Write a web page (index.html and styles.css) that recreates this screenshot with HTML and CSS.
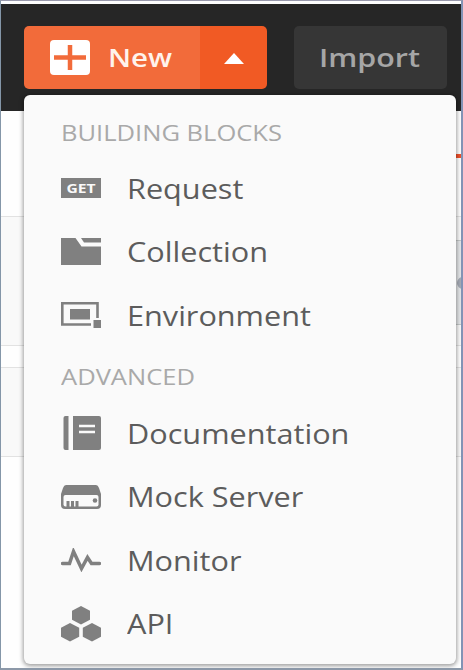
FILE: index.html
```html
<!DOCTYPE html>
<html lang="en">
<head>
    <meta charset="UTF-8">
    <meta name="viewport" content="width=device-width, initial-scale=1.0">
    <title>New</title>
    <link rel="stylesheet" href="styles.css">
</head>
<body>
    <div class="window">
        <header class="topbar">
            <div class="new-button">
                <button class="new-main">
                    <svg class="plus-icon" width="40" height="35" viewBox="0 0 40 35">
                        <rect width="40" height="35" rx="4" fill="#fff"/>
                        <path d="M4 17.5H36M20 5V30" stroke="#f26b3a" stroke-width="4.5"/>
                    </svg>
                    <span class="label">New</span>
                </button>
                <button class="new-toggle">
                    <svg width="20" height="11" viewBox="0 0 20 11"><path d="M0 11L10 0L20 11Z" fill="#fff"/></svg>
                </button>
            </div>
            <button class="import-button"><span class="label">Import</span></button>
        </header>
        <main class="page">
            <div class="tabs"><div class="active-tab"></div></div>
            <div class="url-bar"><div class="field"><div class="knob"></div></div></div>
            <div class="gap"></div>
            <div class="params"></div>
        </main>
        <div class="menu">
            <div class="menu-heading first"><span class="label">BUILDING BLOCKS</span></div>
            <div class="menu-item">
                <span class="get-icon"><span>GET</span></span>
                <span class="label">Request</span>
            </div>
            <div class="menu-item">
                <svg class="icon" width="40" height="27" viewBox="0 0 40 27">
                    <path d="M0 0H14.5L20.5 8.5H40V27H0Z"/>
                    <path d="M20 0H40V4.5H23Z"/>
                </svg>
                <span class="label">Collection</span>
            </div>
            <div class="menu-item">
                <svg class="icon" width="40" height="26" viewBox="0 0 40 26">
                    <path d="M30 22.5H1.3V1.3H36.5V16" fill="none" stroke="#808080" stroke-width="2.6"/>
                    <rect x="9" y="7" width="20" height="10.5"/>
                    <rect x="32.5" y="18" width="7.5" height="8"/>
                </svg>
                <span class="label">Environment</span>
            </div>
            <div class="menu-heading"><span class="label">ADVANCED</span></div>
            <div class="menu-item">
                <svg class="icon" width="40" height="34" viewBox="0 0 40 34">
                    <path d="M4.5 0H7.5V34H4.5Q2.500 34 2.500 32V2Q2.500 0 4.500 0Z"/>
                    <path d="M12 0H38Q40 0 40 2V32Q40 34 38 34H12Z"/>
                    <path d="M18 10H34M18 16H34" stroke="#fafafa" stroke-width="2.6"/>
                </svg>
                <span class="label">Documentation</span>
            </div>
            <div class="menu-item">
                <svg class="icon" width="40" height="24" viewBox="0 0 40 24">
                    <path d="M5 0H35Q37 0 38 3L40 9V20Q40 24 36 24H4Q0 24 0 20V9L2 3Q3 0 5 0Z"/>
                    <path d="M4.5 10H35.5Q37.5 10 37.5 12V19.5Q37.5 21.500 35.500 21.500H4.500Q2.500 21.500 2.500 19.500V12Q2.500 10 4.500 10Z" fill="#fafafa"/>
                    <path d="M7 16V22M11.5 16V22M16 16V22" stroke="#808080" stroke-width="3"/>
                    <circle cx="34" cy="15.5" r="2.3"/>
                </svg>
                <span class="label">Mock Server</span>
            </div>
            <div class="menu-item">
                <svg class="icon" width="40" height="24" viewBox="0 0 40 24">
                    <path d="M1.500 15.500H8.500L12.500 3.500L20.500 20.500L26.500 9.500L30.500 15.500H38.500" fill="none" stroke="#808080" stroke-width="3.500" stroke-linecap="round"/>
                </svg>
                <span class="label">Monitor</span>
            </div>
            <div class="menu-item">
                <svg class="icon" width="40" height="36" viewBox="0 0 40 36">
                    <path d="M20 0L29 4.8V13.7L20 18.5L11 13.7V4.8Z"/>
                    <path d="M9 17L18.2 21.8V30.7L9 35.500L0 30.700V21.800Z"/>
                    <path d="M31 17L40 21.8V30.7L31 35.500L21.800 30.700V21.800Z"/>
                </svg>
                <span class="label">API</span>
            </div>
        </div>
    </div>
</body>
</html>
```
FILE: styles.css
```css
* {
    box-sizing: border-box;
}

body {
    margin: 0;
    font-family: "Open Sans", "Noto Sans", sans-serif;
}

button {
    border: 0;
    padding: 0;
    font-family: inherit;
    cursor: pointer;
}

.window {
    position: relative;
    width: 463px;
    height: 670px;
    overflow: hidden;
    padding-top: 3px;
    background-color: #fefefe;
    border: 1px solid #8496a8;
    border-top-color: #9a9aad;
    border-right: 2px solid #8293b5;
    border-bottom: 2px solid #8c98a8;
}

/* the lettering is wider than the font draws it */
.label {
    display: inline-block;
    white-space: nowrap;
    transform: scaleX(1.135);
    transform-origin: left center;
}

.topbar {
    display: flex;
    align-items: flex-start;
    gap: 27px;
    height: 107px;
    padding: 22px 0 0 23px;
    background-color: #262626;
}

.new-button {
    display: flex;
    width: 243px;
    height: 63px;
    border-radius: 5px;
    overflow: hidden;
}

.new-main {
    display: flex;
    align-items: center;
    gap: 18px;
    width: 176px;
    padding-left: 26px;
    background-color: #f26b3a;
    color: #fff3ec;
    font-size: 26px;
    font-weight: 600;
}

.new-main .label,
.import-button .label {
    padding-bottom: 2px;
}

.new-toggle {
    display: flex;
    flex: 1;
    align-items: center;
    justify-content: center;
    padding-top: 1px;
    background-color: #f15a24;
}

.import-button {
    width: 153px;
    height: 63px;
    padding-left: 25px;
    border-radius: 5px;
    background-color: #363636;
    color: #a6a6a6;
    font-size: 26px;
    font-weight: 600;
    text-align: left;
}

.import-button .label {
    transform: scaleX(1.17);
}

.page {
    height: 557px;
}

.tabs {
    display: flex;
    justify-content: flex-end;
    height: 106px;
    padding-top: 43px;
    border-bottom: 1px solid #e2e2e2;
}

.active-tab {
    width: 8px;
    height: 4px;
    background-color: #f0512b;
}

.url-bar {
    display: flex;
    justify-content: flex-end;
    height: 129px;
    padding-top: 23px;
    background-color: #f9f9f9;
    border-bottom: 1px solid #e2e2e2;
}

.field {
    display: flex;
    align-items: center;
    justify-content: flex-end;
    width: 8px;
    height: 85px;
    overflow: hidden;
    background-color: #e4e6e8;
    border: solid #c4c8c8;
    border-width: 1px 0;
}

.knob {
    flex: none;
    width: 12px;
    height: 12px;
    margin-right: -8px;
    border-radius: 50%;
    background-color: #a5abb5;
}

.gap {
    height: 22px;
    border-bottom: 1px solid #e2e2e2;
}

.params {
    height: 89px;
    background-color: #f9f9f9;
    border-bottom: 1px solid #e2e2e2;
}

.menu {
    position: absolute;
    left: 23px;
    top: 94px;
    width: 432px;
    height: 569px;
    padding-left: 37px;
    border-radius: 6px;
    background-color: #fafafa;
    box-shadow: 0 1px 4px 1px rgba(0, 0, 0, 0.38);
}

.menu-heading {
    display: flex;
    align-items: center;
    height: 54px;
    padding-top: 3px;
    color: #a9a9a9;
    font-size: 22px;
}

.menu-heading.first {
    height: 61.5px;
    padding-top: 13px;
}

.menu-heading .label {
    transform: scaleX(1.16);
}

.menu-item {
    display: flex;
    align-items: center;
    gap: 26px;
    height: 63.6px;
    color: #5c5c5c;
    font-size: 27px;
    cursor: pointer;
}

.icon {
    flex: none;
    fill: #808080;
}

.get-icon {
    display: flex;
    align-items: center;
    justify-content: center;
    width: 40px;
    height: 20px;
    background-color: #808080;
    color: #fafafa;
    font-size: 13px;
    font-weight: 700;
}

.get-icon span {
    transform: scaleX(1.2);
}
```
